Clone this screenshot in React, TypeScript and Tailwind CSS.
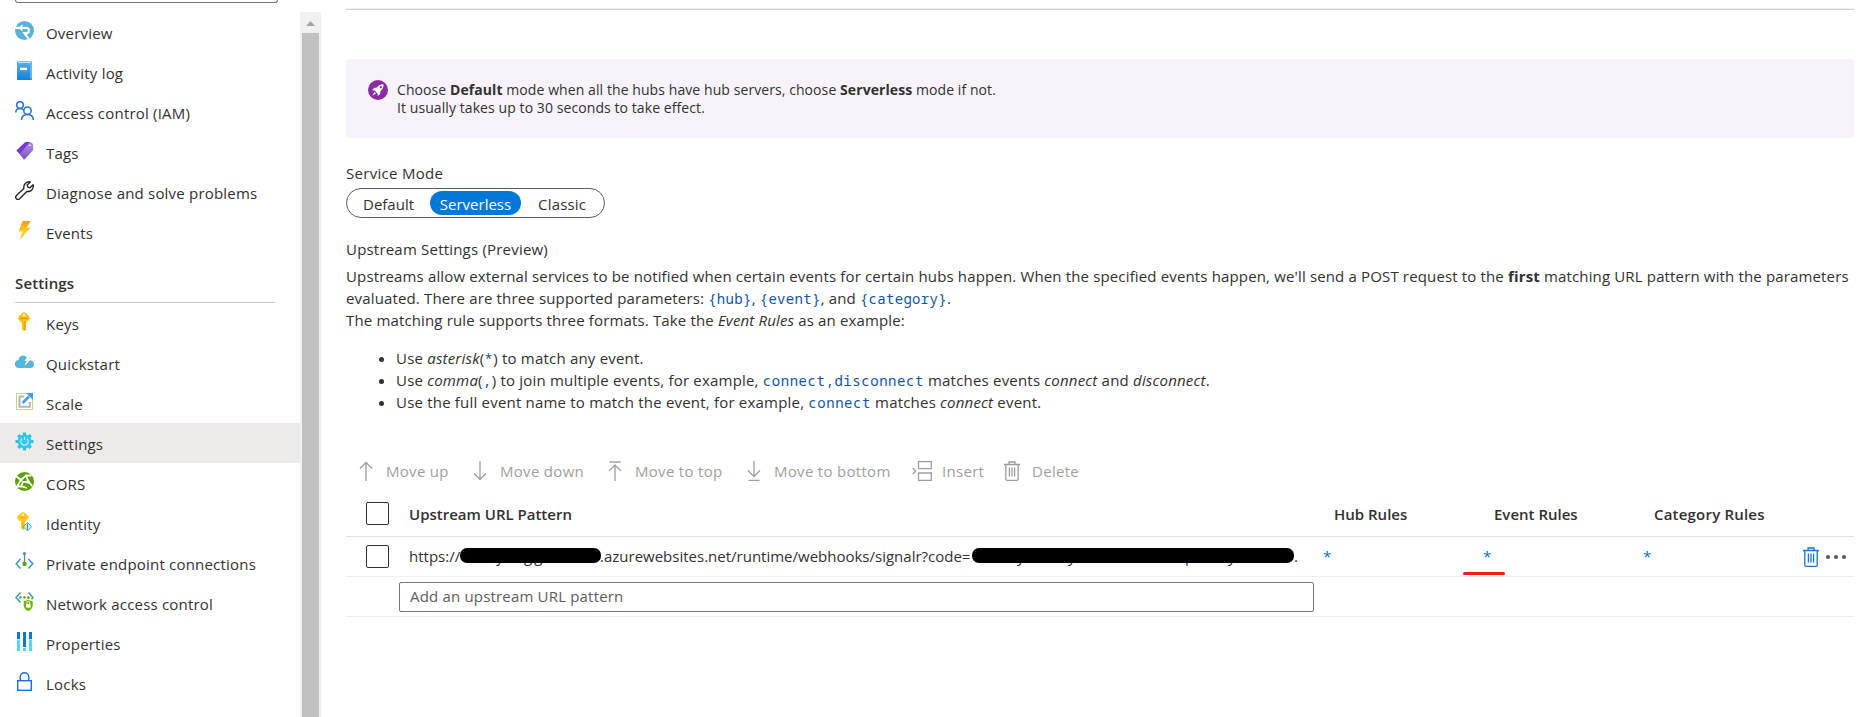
import React from "react";

type IconName =
  | "overview" | "log" | "iam" | "tags" | "wrench" | "events" | "keys" | "quickstart" | "scale"
  | "settings" | "cors" | "identity" | "endpoint" | "network" | "properties" | "locks";

const art: Record<IconName, React.ReactNode> = {
  overview: (
    <>
      <circle cx="9.5" cy="9.5" r="9.5" fill="#59b4d9" />
      <path d="M0 6.8h6.2M6 6.8h5.2a2.7 2.7 0 0 1 0 5.4H9.5l4 5.4" fill="none" stroke="#fff" strokeWidth="2.2" />
      <path d="M3.8 6.8 7.4 3.2v7.2z" fill="#fff" />
    </>
  ),
  log: (
    <>
      <rect x="2" y="0.5" width="15" height="18.5" rx="1" fill="#1b7fd0" />
      <rect x="2" y="1.5" width="13" height="17" fill="url(#logGradient)" />
      <path d="M3 1.5h13v16" fill="none" stroke="#d9edfb" strokeWidth="0.9" />
      <rect x="5" y="6.7" width="7" height="2.4" fill="#fff" />
    </>
  ),
  iam: (
    <g fill="none" stroke="#1b6fe0" strokeWidth="1.5">
      <circle cx="5" cy="4" r="3.3" />
      <path d="M.8 11.5c0-2.8 1.8-4 4.2-4 1.6 0 2.8.5 3.5 1.6" />
      <circle cx="12.5" cy="9.7" r="3.7" />
      <path d="M6.5 19c.2-3.7 2.6-5.4 6-5.4s5.7 1.7 5.9 5.4" />
    </g>
  ),
  tags: (
    <>
      <path d="M1.5 9.5 10.5 1l5.5.2 2 1.8.2 6-9 9.7z" fill="url(#tagGradient)" />
      <path d="M1.5 9.5 10.5 1l4.3.1L5 12.8z" fill="#7b35d8" />
      <circle cx="14.8" cy="4.3" r="1.4" fill="#fff" stroke="#8a55d0" strokeWidth=".8" />
    </>
  ),
  wrench: (
    <path
      d="M8.9 7.6 1.4 14.6c-2 2.2 1 5.2 3.2 3.2l7.2-7.4c3.9.7 7.3-2.5 6.3-6.7l-3.1 3.1-2.1-.7-.7-2.1L15.3.9C11.3.1 8.1 3.5 8.9 7.6z"
      fill="none" stroke="#262626" strokeWidth="1.4" strokeLinejoin="round"
    />
  ),
  events: <path d="M7.5 0h8.2l-4 6.8h3.8L4.5 18.8l3.3-8.300H3.6z" fill="url(#boltGradient)" />,
  keys: (
    <>
      <path d="M9 0c1 0 6 4.5 6 6s-3 4-4 5v6.500L9 19l-2-1.500V11C6 10 3 7.500 3 6s5-6 6-6z" fill="#fdc30f" />
      <path d="M9 9.5V19l2-1.500V9z" fill="#f5a800" />
      <path d="M5 6.5h8" stroke="#e9940b" strokeWidth="1.5" />
      <circle cx="9" cy="3.2" r="1.4" fill="#fff3c8" />
    </>
  ),
  quickstart: (
    <>
      <path d="M4.200 16A4 4 0 0 1 3.600 8 5 5 0 0 1 8 3.600c1.800 0 3 .7 3.800 1.800C14.800 5 16 7 16 8.400c4.200.600 3.900 7.600-.600 7.600z" fill="#59b4d9" />
      <path d="M13.5 3h3l-2 4h2.200L9.500 13.700l2-4.700H9.300z" fill="#fff" />
    </>
  ),
  scale: (
    <>
      <rect x="1.5" y="1.5" width="16" height="16" fill="none" stroke="#7fba00" strokeWidth="1" strokeDasharray="1 1" />
      <path d="M9 4.500H4.500v10.200h10.300V10" fill="none" stroke="#b4b4b4" strokeWidth="2" />
      <path d="m7.500 11 6.500-6.500" stroke="#3f9ff0" strokeWidth="2.6" />
      <path d="M11 1h7v7z" fill="#3f9ff0" />
    </>
  ),
  settings: (
    <>
      <g stroke="#32bedd" strokeWidth="3.2">
        <path d="M9.500.5v18M.5 9.500h18M3.200 3.200l12.600 12.600M15.800 3.200 3.200 15.800" />
      </g>
      <circle cx="9.5" cy="9.5" r="6.9" fill="#32c8ea" />
      <path d="M7 6.700a3.700 3.700 0 1 0 5 0M9.500 5v3" fill="none" stroke="#c5f2fb" strokeWidth="1.1" />
    </>
  ),
  cors: (
    <>
      <circle cx="9.5" cy="9.5" r="9.5" fill="#57a300" />
      <path d="M1.500 4.500 6 8l5-4.500h5.500M11 3.500l2.500 6L8 10l-2 4.500M13.500 9.500 17 14M6 8 2 14.500h5l5 1.500" fill="none" stroke="#fff" strokeWidth="1.8" />
      <circle cx="6" cy="8" r="1.5" fill="#fff" /><circle cx="13" cy="10" r="1.8" fill="#fff" />
    </>
  ),
  identity: (
    <>
      <path d="M8 0c1 0 6 4 6 5.200S11 9 10 10v6l-2 2-2-2v-6C5 9 2 6.400 2 5.200S7 0 8 0z" fill="#ffcb1f" />
      <path d="M5 5.500h6M8 10v7" stroke="#f2a900" strokeWidth="1.2" />
      <circle cx="8" cy="2.7" r="1.2" fill="#fff3c8" />
      <path d="m12.500 10.500 4.200 4.200-4.200 4.200-4.200-4.200z" fill="#c8ebf6" stroke="#4fa8c8" />
      <path d="M12.500 11.500v6.500" stroke="#3999c6" strokeWidth="1" />
    </>
  ),
  endpoint: (
    <>
      <path d="M5.500 7 1.200 11.800l4.300 4.700M13.500 7l4.300 4.800-4.300 4.700" fill="none" stroke="#3999c6" strokeWidth="1.5" />
      <path d="M9.500 2v9" stroke="#7a7a7a" strokeWidth="1.3" />
      <circle cx="9.5" cy="1.6" r="1.6" fill="#3999c6" /><circle cx="9.5" cy="11.9" r="2.2" fill="#57a300" />
    </>
  ),
  network: (
    <>
      <path d="M5.500.5 1 5.500l4.500 5M13.500.5 18 5.500l-1.500 1.800" fill="none" stroke="#3999c6" strokeWidth="1.5" />
      <g fill="#57a300"><circle cx="5.5" cy="5.5" r="1.3" /><circle cx="9.5" cy="5.5" r="1.3" /><circle cx="13.5" cy="5.5" r="1.3" /></g>
      <path d="M8.700 9.200c2 0 3-.5 4.500-1.400 1.500.9 2.500 1.400 4.500 1.400v3.700c0 3.200-2 5-4.500 6.100-2.500-1.100-4.500-2.900-4.500-6.100z" fill="#6bb700" />
      <rect x="11" y="12" width="4.6" height="3.6" fill="#fff" /><path d="M12 12v-1.300a1.300 1.300 0 0 1 2.600 0V12" fill="none" stroke="#fff" />
    </>
  ),
  properties: (
    <>
      <path d="M3.500 0v7M15.500 0v7M9.500 0v15" stroke="#0f78d4" strokeWidth="3" />
      <path d="M3.500 7.500V19M15.500 7.500V19M9.500 16v3" stroke="#50d9f5" strokeWidth="3" />
    </>
  ),
  locks: (
    <g fill="none" stroke="#1b6fe0" strokeWidth="1.4">
      <rect x="2.7" y="8.7" width="13.6" height="9.6" /><path d="M5.200 8.500V5a4.300 4.300 0 0 1 8.600 0v3.500" />
    </g>
  ),
};

function Icon({ name }: { name: IconName }) {
  return <svg viewBox="0 0 19 19" className="-mt-[3px] size-[19px] shrink-0">{art[name]}</svg>;
}

function Gradients() {
  return (
    <svg className="absolute size-0">
      <defs>
        <linearGradient id="logGradient" x1="0" y1="0" x2="0" y2="1"><stop stopColor="#57adea" /><stop offset="1" stopColor="#1583da" /></linearGradient>
        <linearGradient id="tagGradient" x1="0" y1="0" x2="0" y2="1"><stop stopColor="#b796e8" /><stop offset="1" stopColor="#7a4bb5" /></linearGradient>
        <linearGradient id="boltGradient" x1="0" y1="0" x2="0" y2="1"><stop stopColor="#f79a1d" /><stop offset=".6" stopColor="#ffd21f" /><stop offset="1" stopColor="#f7a81d" /></linearGradient>
      </defs>
    </svg>
  );
}

type Item = { icon: IconName; label: string; active?: boolean };

const general: Item[] = [
  { icon: "overview", label: "Overview" },
  { icon: "log", label: "Activity log" },
  { icon: "iam", label: "Access control (IAM)" },
  { icon: "tags", label: "Tags" },
  { icon: "wrench", label: "Diagnose and solve problems" },
  { icon: "events", label: "Events" },
];

const settings: Item[] = [
  { icon: "keys", label: "Keys" },
  { icon: "quickstart", label: "Quickstart" },
  { icon: "scale", label: "Scale" },
  { icon: "settings", label: "Settings", active: true },
  { icon: "cors", label: "CORS" },
  { icon: "identity", label: "Identity" },
  { icon: "endpoint", label: "Private endpoint connections" },
  { icon: "network", label: "Network access control" },
  { icon: "properties", label: "Properties" },
  { icon: "locks", label: "Locks" },
];

function NavItem({ icon, label, active }: Item) {
  return (
    <li className={`flex h-10 items-center gap-3 pl-[15px] ${active ? "bg-[#edebe9]" : ""}`}>
      <Icon name={icon} />
      <span className="pt-px tracking-[0.2px]">{label}</span>
    </li>
  );
}

function Sidebar() {
  return (
    <aside className="flex h-full w-[321px] shrink-0">
      <div className="w-[300px]">
        <div className="ml-[15px] h-[3px] w-[263px] rounded-b-[3px] border border-t-0 border-[#7a7876]" />
        <ul className="mt-[9px]">{general.map((i) => <NavItem key={i.label} {...i} />)}</ul>
        <h2 className="mr-[25px] ml-[15px] flex h-[51px] items-center border-b border-[#c8c6c4] pt-[11px] font-semibold tracking-[0.15px]">Settings</h2>
        <ul>{settings.map((i) => <NavItem key={i.label} {...i} />)}</ul>
      </div>
      <div className="mt-3 flex w-[21px] flex-col items-center bg-[#f1f1f1]">
        <svg viewBox="0 0 21 21" className="size-[21px]"><path d="m6 14 4.500-5 4.500 5z" fill="#a3a3a3" /></svg>
        <div className="w-[17px] flex-1 bg-[#c1c1c1]" />
      </div>
    </aside>
  );
}

function Code({ children, wide }: { children: React.ReactNode; wide?: boolean }) {
  return (
    <code className={`font-['Noto_Sans_Mono','DejaVu_Sans_Mono',monospace] text-[14px] leading-none text-[#0f55a5] ${wide ? "tracking-[0.55px]" : "tracking-[0.3px]"}`}>
      {children}
    </code>
  );
}

function Rocket() {
  return (
    <svg viewBox="0 0 20 20" className="size-5 shrink-0">
      <circle cx="10" cy="10" r="10" fill="#8a2da5" />
      <path d="M15.500 4.300c-3.200-.1-5 1.200-6.700 3.300l-2.700.3-2 2.300 2.400.3 3 3 .3 2.500 2.300-2 .3-2.800c2.100-1.700 3.300-3.600 3.100-6.900zM6.500 12 4.300 15.700 8 13.500z" fill="#fff" />
      <circle cx="12.8" cy="7.2" r="1.1" fill="#8a2da5" />
    </svg>
  );
}

function Stroke({ d, className }: { d: string; className: string }) {
  return <svg viewBox="0 0 20 20" className={`size-5 shrink-0 ${className}`} fill="none" stroke="currentColor" strokeWidth="1.3"><path d={d} /></svg>;
}

const trash = "M2 3.500h16M7 3.500V1h6v2.500M3.800 3.500v14.700q0 1.100 1.100 1.100h10.200q1.100 0 1.100-1.100V3.500M7.400 6.500v9M10 6.500v9M12.600 6.500v9";

const actions = [
  { label: "Move up", d: "M10 20V1.500M4 7.500l6-6 6 6", w: "w-[114px]" },
  { label: "Move down", d: "M10 0v18.500M4 12.500l6 6 6-6", w: "w-[135px]" },
  { label: "Move to top", d: "M4.500 1h11M10 20V4M4 10l6-6 6 6", w: "w-[139px]" },
  { label: "Move to bottom", d: "M4.500 19.300h11M10 0v15.500M4 9.500l6 6 6-6", w: "w-[168px]" },
  { label: "Insert", d: "M6.500 .7h12.800v7H6.500zM6.500 12h12.800v7.300H6.500zM.7 7l3 3L.7 13", w: "w-[90px]" },
  { label: "Delete", d: trash, w: "w-[90px]" },
];

function CheckBox() {
  return <span className="size-[23px] shrink-0 rounded-[2px] border border-[#323130] bg-white" />;
}

function Notice() {
  return (
    <section className="mt-[49px] flex h-[79px] gap-[9px] rounded-[3px] bg-[#f8f3fb] pt-[21px] pl-[22px] text-[14px] leading-[18px] tracking-[0.08px]">
      <Rocket />
      <p className="pt-px">
        Choose <b>Default</b> mode when all the hubs have hub servers, choose <b>Serverless</b> mode if not.
        <br />
        It usually takes up to 30 seconds to take effect.
      </p>
    </section>
  );
}

function Rules() {
  return (
    <div className="leading-[22px] tracking-[0.15px]">
      <p>
        Upstreams allow external services to be notified when certain events for certain hubs happen. When the specified events happen, we'll send a POST request to the <b>first</b> matching URL pattern with the parameters
      </p>
      <p className="h-[22px]">evaluated. There are three supported parameters: <Code>{"{hub}"}</Code>, <Code>{"{event}"}</Code>, and <Code>{"{category}"}</Code>.</p>
      <p>The matching rule supports three formats. Take the <i>Event Rules</i> as an example:</p>
      <ul className="mt-4 list-disc pl-[50px] tracking-[0.2px]">
        <li className="h-[22px]">Use <i>asterisk</i>(<Code wide>*</Code>) to match any event.</li>
        <li className="h-[22px]">Use <i>comma</i>(<Code wide>,</Code>) to join multiple events, for example, <Code wide>connect,disconnect</Code> matches events <i>connect</i> and <i>disconnect</i>.</li>
        <li className="h-[22px]">Use the full event name to match the event, for example, <Code wide>connect</Code> matches <i>connect</i> event.</li>
      </ul>
    </div>
  );
}

function Redacted({ className, children }: { className: string; children: React.ReactNode }) {
  return (
    <span className={`relative flex h-5 shrink-0 ${className}`}>
      {children}
      <span className="absolute inset-x-0 top-[2px] h-[15px] rounded-[7px] bg-black" />
    </span>
  );
}

function Grid() {
  return (
    <div>
      <div className="flex h-[47px] items-center border-b border-[#e4e2e0] pl-5 font-semibold">
        <CheckBox />
        <div className="ml-5 flex pt-[2px]">
          <span className="w-[925px]">Upstream URL Pattern</span>
          <span className="w-40">Hub Rules</span>
          <span className="w-40">Event Rules</span>
          <span className="tracking-[0.2px]">Category Rules</span>
        </div>
      </div>
      <div className="flex h-10 items-center border-b border-[#f0efee] pl-5">
        <CheckBox />
        <div className="ml-5 flex w-[914px] items-center pb-[2px]">
          <span className="w-[51px]">https://</span>
          <Redacted className="w-[141px]">
            <span className="ml-9 w-[28px]">y</span>
            <span className="tracking-[2px]">gg</span>
          </Redacted>
          <span className="-ml-px w-[372px]">.azurewebsites.net/runtime/webhooks/signalr?code=</span>
          <Redacted className="w-[322px]">
            <span className="ml-[45px] w-[51px]">y</span>
            <span className="w-[117px]">y</span>
            <span className="w-[43px]">p</span>
            <span>y</span>
          </Redacted>
          <span>.</span>
        </div>
        <a className="w-40 pb-[2px] text-[#0f6fd0]">*</a>
        <a className="relative w-40 pb-[2px] text-[#0f6fd0]">
          *
          <i className="absolute top-[26px] -left-[20px] h-[3px] w-[42px] rounded-full bg-[#e8201c]" />
        </a>
        <a className="w-[158px] pb-[2px] text-[#0f6fd0]">*</a>
        <Stroke d={trash} className="text-[#0f78d4]" />
        <svg viewBox="0 0 22 6" className="ml-[4px] h-[6px] w-[22px]" fill="#605e5c"><circle cx="3" cy="3" r="2.1" /><circle cx="11" cy="3" r="2.1" /><circle cx="19" cy="3" r="2.1" /></svg>
      </div>
      <div className="flex h-10 items-center border-b border-[#f0efee] pl-[53px]">
        <div className="flex h-[30px] w-[915px] items-center rounded-[2px] border border-[#7a7876] pb-[2px] pl-[10px] tracking-[0.18px] text-[#605e5c]">Add an upstream URL pattern</div>
      </div>
    </div>
  );
}

export default function App() {
  return (
    <div className="flex h-[717px] w-[1867px] overflow-hidden bg-white font-['Open_Sans','Noto_Sans',sans-serif] text-[15px] leading-5 whitespace-nowrap text-[#323130]">
      <Gradients />
      <Sidebar />
      <main className="ml-[25px] w-[1508px] pt-2">
        <div className="h-[2px] border-b border-[#d2d0ce] bg-[#f0f0f0]" />
        <Notice />
        <div className="mt-[25px] tracking-[0.3px]">Service Mode</div>
        <div className="mt-[5px] flex h-[30px] w-[259px] items-center rounded-full border border-[#605e5c]">
          <span className="w-[83px] pt-[2px] pl-4">Default</span>
          <span className="flex h-6 w-[91px] items-center justify-center rounded-full bg-[#0078d7] pt-px text-white">Serverless</span>
          <span className="pt-[2px] pl-[17px] tracking-[0.2px]">Classic</span>
        </div>
        <div className="mt-[21px] mb-[6px] tracking-[0.2px]">Upstream Settings (Preview)</div>
        <Rules />
        <div className="mt-[48px] flex h-[29px] items-start pl-[10px] text-[#a19f9d]">
          {actions.map((a) => (
            <div key={a.label} className={`flex items-center ${a.w}`}>
              <Stroke d={a.d} className="mr-[10px]" />
              <span className="tracking-[0.3px]">{a.label}</span>
            </div>
          ))}
        </div>
        <Grid />
      </main>
    </div>
  );
}
